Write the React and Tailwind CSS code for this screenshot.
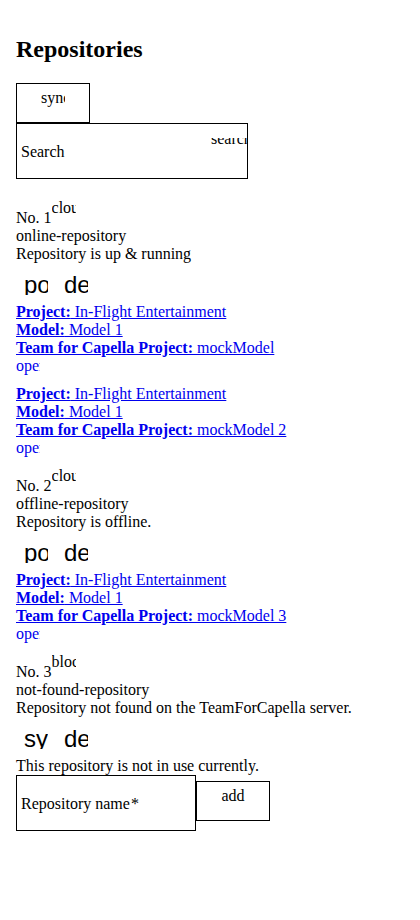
import React from "react";

const Icon = ({ name }) => (
  <span className="inline-block w-6 h-6 overflow-hidden whitespace-nowrap align-baseline">
    {name}
  </span>
);

const IconButton = ({ name }) => (
  <button type="button" className="w-10 h-10 p-2 flex">
    <span className="block w-6 h-6 overflow-hidden whitespace-nowrap font-['Liberation_Sans',Arial,sans-serif] text-[24px] leading-[normal] text-black">
      {name}
    </span>
  </button>
);

const ModelLink = ({ model }) => (
  <a href="#" className="block text-[#0000ee] underline">
    <div>
      <b>Project:</b> In-Flight Entertainment
    </div>
    <div>
      <b>Model:</b> Model 1
    </div>
    <div>
      <b>Team for Capella Project:</b> {model}
    </div>
    <div>
      <Icon name="open_in_new" />
    </div>
  </a>
);

const Card = ({ no, status, name, text, actions, models, note }) => (
  <div>
    <div>
      No. {no}
      <Icon name={status} />
    </div>
    <div>{name}</div>
    <div>{text}</div>
    <div className="flex">
      {actions.map((a) => (
        <IconButton key={a} name={a} />
      ))}
    </div>
    {models.map((m) => (
      <ModelLink key={m} model={m} />
    ))}
    {note && <div>{note}</div>}
  </div>
);

export default function App() {
  return (
    <div className="min-h-[920px] bg-white px-4 pt-px font-['Liberation_Serif','Times_New_Roman',serif] text-[16px] leading-[normal] text-black">
      <h2 className="mt-[35px] mb-[20px] text-[24px] font-bold leading-[normal]">Repositories</h2>
      <button
        type="button"
        className="flex h-[40px] w-[74px] justify-center border border-black pt-[5px]"
      >
        <span className="block h-6 w-6 overflow-hidden whitespace-nowrap leading-[normal]">sync</span>
      </button>
      <div className="relative h-[56px] w-[232px] overflow-hidden border border-black pl-[4px] pt-[19px]">
        <span>Search</span>
        <span className="absolute left-[194px] top-[14px] block h-6 w-[48px] overflow-hidden whitespace-nowrap">
          <span className="-mt-[8px] block leading-[normal]">search</span>
        </span>
      </div>
      <div className="mt-[20px]">
        <Card
          no={1}
          status="cloud"
          name="online-repository"
          text="Repository is up & running"
          actions={["power_off", "delete"]}
          models={["mockModel", "mockModel 2"]}
        />
        <Card
          no={2}
          status="cloud_off"
          name="offline-repository"
          text="Repository is offline."
          actions={["power", "delete"]}
          models={["mockModel 3"]}
        />
        <Card
          no={3}
          status="block"
          name="not-found-repository"
          text="Repository not found on the TeamForCapella server."
          actions={["sync", "delete"]}
          models={[]}
          note="This repository is not in use currently."
        />
      </div>
      <div className="flex items-start">
        <div className="h-[56px] w-[180px] border border-black pl-[4px] pt-[19px]">
          <span>
            Repository name<span className="ml-px">*</span>
          </span>
        </div>
        <button
          type="button"
          className="mt-[6px] flex h-[40px] w-[74px] justify-center border border-black pt-[5px]"
        >
          <span className="block h-6 w-6 overflow-hidden whitespace-nowrap leading-[normal]">add</span>
        </button>
      </div>
    </div>
  );
}
